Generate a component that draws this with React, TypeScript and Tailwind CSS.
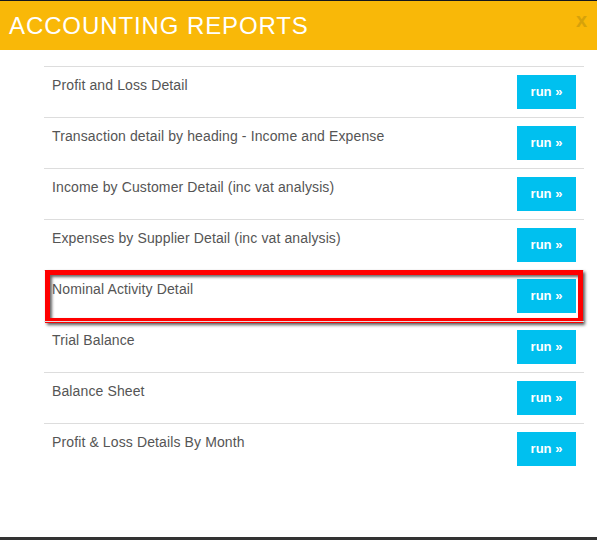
import React from "react";

const rows = [
  "Profit and Loss Detail",
  "Transaction detail by heading - Income and Expense",
  "Income by Customer Detail (inc vat analysis)",
  "Expenses by Supplier Detail (inc vat analysis)",
  "Nominal Activity Detail",
  "Trial Balance",
  "Balance Sheet",
  "Profit & Loss Details By Month",
];

export default function App() {
  return (
    <div
      className="w-[597px] h-[540px] box-border bg-white border-t border-[#14161e] border-b-[3px] border-b-[#333333] flex flex-col"
      style={{ fontFamily: '"Liberation Sans", Arial, sans-serif' }}
    >
      <div className="h-[49px] bg-[#f9b808] flex justify-between px-[9px]">
        <div className="pt-[11px] text-[24px] leading-[28px] tracking-[0.9px] text-white">
          ACCOUNTING REPORTS
        </div>
        <div className="mt-[9px] mr-[1px] text-[20px] leading-[20px] font-bold text-[#d6a20a]">x</div>
      </div>
      <div className="pt-[16px] px-[13px]">
        <div className="w-[540px] ml-[31px]">
          {rows.map((r, i) => (
            <div
              key={r}
              className="relative flex justify-between items-start p-2 border-t border-[#dddddd]"
            >
              <div className="text-[14px] leading-5 tracking-[0.12px] text-[#555555]">{r}</div>
              <button className="w-[59px] h-[34px] bg-[#00c0ef] text-white text-[13px] font-bold leading-[34px] text-center">
                run »
              </button>
              {i === 4 && (
                <div className="absolute -top-px left-px right-px h-[53px] border-[5px] border-[#ff0000] shadow-[2px_2px_3px_rgba(0,0,0,0.65),inset_2px_2px_3px_rgba(0,0,0,0.6)] pointer-events-none" />
              )}
            </div>
          ))}
        </div>
      </div>
    </div>
  );
}
